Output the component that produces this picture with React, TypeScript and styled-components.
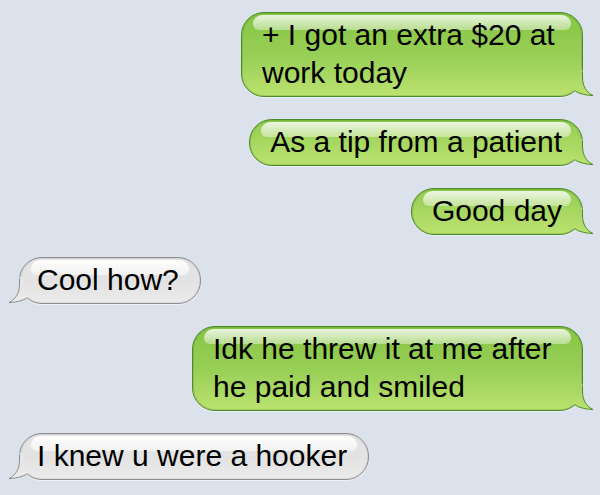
import React from "react";
import styled, { createGlobalStyle, css } from "styled-components";

const Global = createGlobalStyle`
  html, body { margin: 0; padding: 0; background: #dbe2ec; }
  body { width: 600px; height: 495px; overflow: hidden; }
`;

const Thread = styled.div`
  display: flex;
  flex-direction: column;
  gap: 22px;
  padding: 12px 17px 0 19px;
  font-family: "Liberation Sans", Arial, sans-serif;
  font-size: 30px;
  line-height: 38px;
  color: #000;
`;

const Row = styled.div<{ $me: boolean }>`
  display: flex;
  justify-content: ${(p) => (p.$me ? "flex-end" : "flex-start")};
`;

const Bubble = styled.div<{ $me: boolean; $width?: number }>`
  position: relative;
  box-sizing: border-box;
  ${(p) => (p.$width ? `width: ${p.$width}px;` : "")}
  padding: ${(p) => (p.$me ? "3px 20px 4px 20px" : "3px 21px 4px 17px")};
  border-radius: 23px;
  ${(p) =>
    p.$me
      ? css`
          background: linear-gradient(to top, #bbe26f 0px, #98cf56 40px, #86c544 100%);
          border: 1px solid #4c8a2c;
          box-shadow: inset 0 0 0 1px rgba(60, 120, 30, 0.2), 0 1px 1px rgba(255, 255, 255, 0.5);
        `
      : css`
          background: linear-gradient(to top, #ebebeb 0px, #e3e3e3 20px, #e3e3e3 100%);
          border: 1px solid #8b8b8b;
          box-shadow: inset 0 0 0 1px rgba(120, 120, 120, 0.12), 0 1px 1px rgba(255, 255, 255, 0.6);
        `}

  &::before {
    content: "";
    position: absolute;
    top: 2px;
    left: 11px;
    right: 11px;
    height: 15px;
    border-radius: 12px 12px 8px 8px;
    background: ${(p) =>
      p.$me
        ? "linear-gradient(rgba(255,255,255,0.82), rgba(255,255,255,0.38))"
        : "linear-gradient(rgba(255,255,255,0.95), rgba(255,255,255,0.55))"};
  }
`;

const Text = styled.span`
  position: relative;
  z-index: 1;
  white-space: nowrap;
`;

const TailSvg = styled.svg<{ $me: boolean }>`
  position: absolute;
  bottom: -1px;
  width: 28px;
  height: 28px;
  overflow: visible;
  ${(p) =>
    p.$me
      ? css`
          right: -15px;
        `
      : css`
          left: -15px;
          transform: scaleX(-1);
        `}
`;

const FILL_PATH =
  "M 10 1 L 13.5 1 L 13.5 8 C 13.5 17, 17 23, 24 26.5 C 19 26.5, 10 25, 6 21.8 L 3.5 21 L 6.5 15 L 9 6 Z";
const STROKE_PATH =
  "M 13.5 3 L 13.5 8 C 13.5 17, 17 23, 24 26.5 C 19 26.5, 10 25, 6 21.8";

function Tail({ me, id }: { me: boolean; id: string }) {
  const top = me ? "#a2d55e" : "#e4e4e4";
  const bottom = me ? "#bbe26f" : "#ebebeb";
  const stroke = me ? "#4c8a2c" : "#8b8b8b";
  return (
    <TailSvg $me={me} viewBox="0 0 28 28">
      <defs>
        <linearGradient id={id} x1="0" y1="0" x2="0" y2="28" gradientUnits="userSpaceOnUse">
          <stop offset="0" stopColor={top} />
          <stop offset="1" stopColor={bottom} />
        </linearGradient>
      </defs>
      <path d={FILL_PATH} fill={`url(#${id})`} />
      <path d={STROKE_PATH} fill="none" stroke={stroke} strokeWidth="1" />
    </TailSvg>
  );
}

type Msg = { me: boolean; lines: string[]; width?: number };

const messages: Msg[] = [
  { me: true, lines: ["+ I got an extra $20 at", "work today"], width: 342 },
  { me: true, lines: ["As a tip from a patient"] },
  { me: true, lines: ["Good day"] },
  { me: false, lines: ["Cool how?"] },
  { me: true, lines: ["Idk he threw it at me after", "he paid and smiled"], width: 391 },
  { me: false, lines: ["I knew u were a hooker"] },
];

export default function App() {
  return (
    <>
      <Global />
      <Thread>
        {messages.map((m, i) => (
          <Row key={i} $me={m.me}>
            <Bubble $me={m.me} $width={m.width}>
              <Tail me={m.me} id={`tail-${i}`} />
              <Text>
                {m.lines.map((l, j) => (
                  <React.Fragment key={j}>
                    {j > 0 && <br />}
                    {l}
                  </React.Fragment>
                ))}
              </Text>
            </Bubble>
          </Row>
        ))}
      </Thread>
    </>
  );
}
